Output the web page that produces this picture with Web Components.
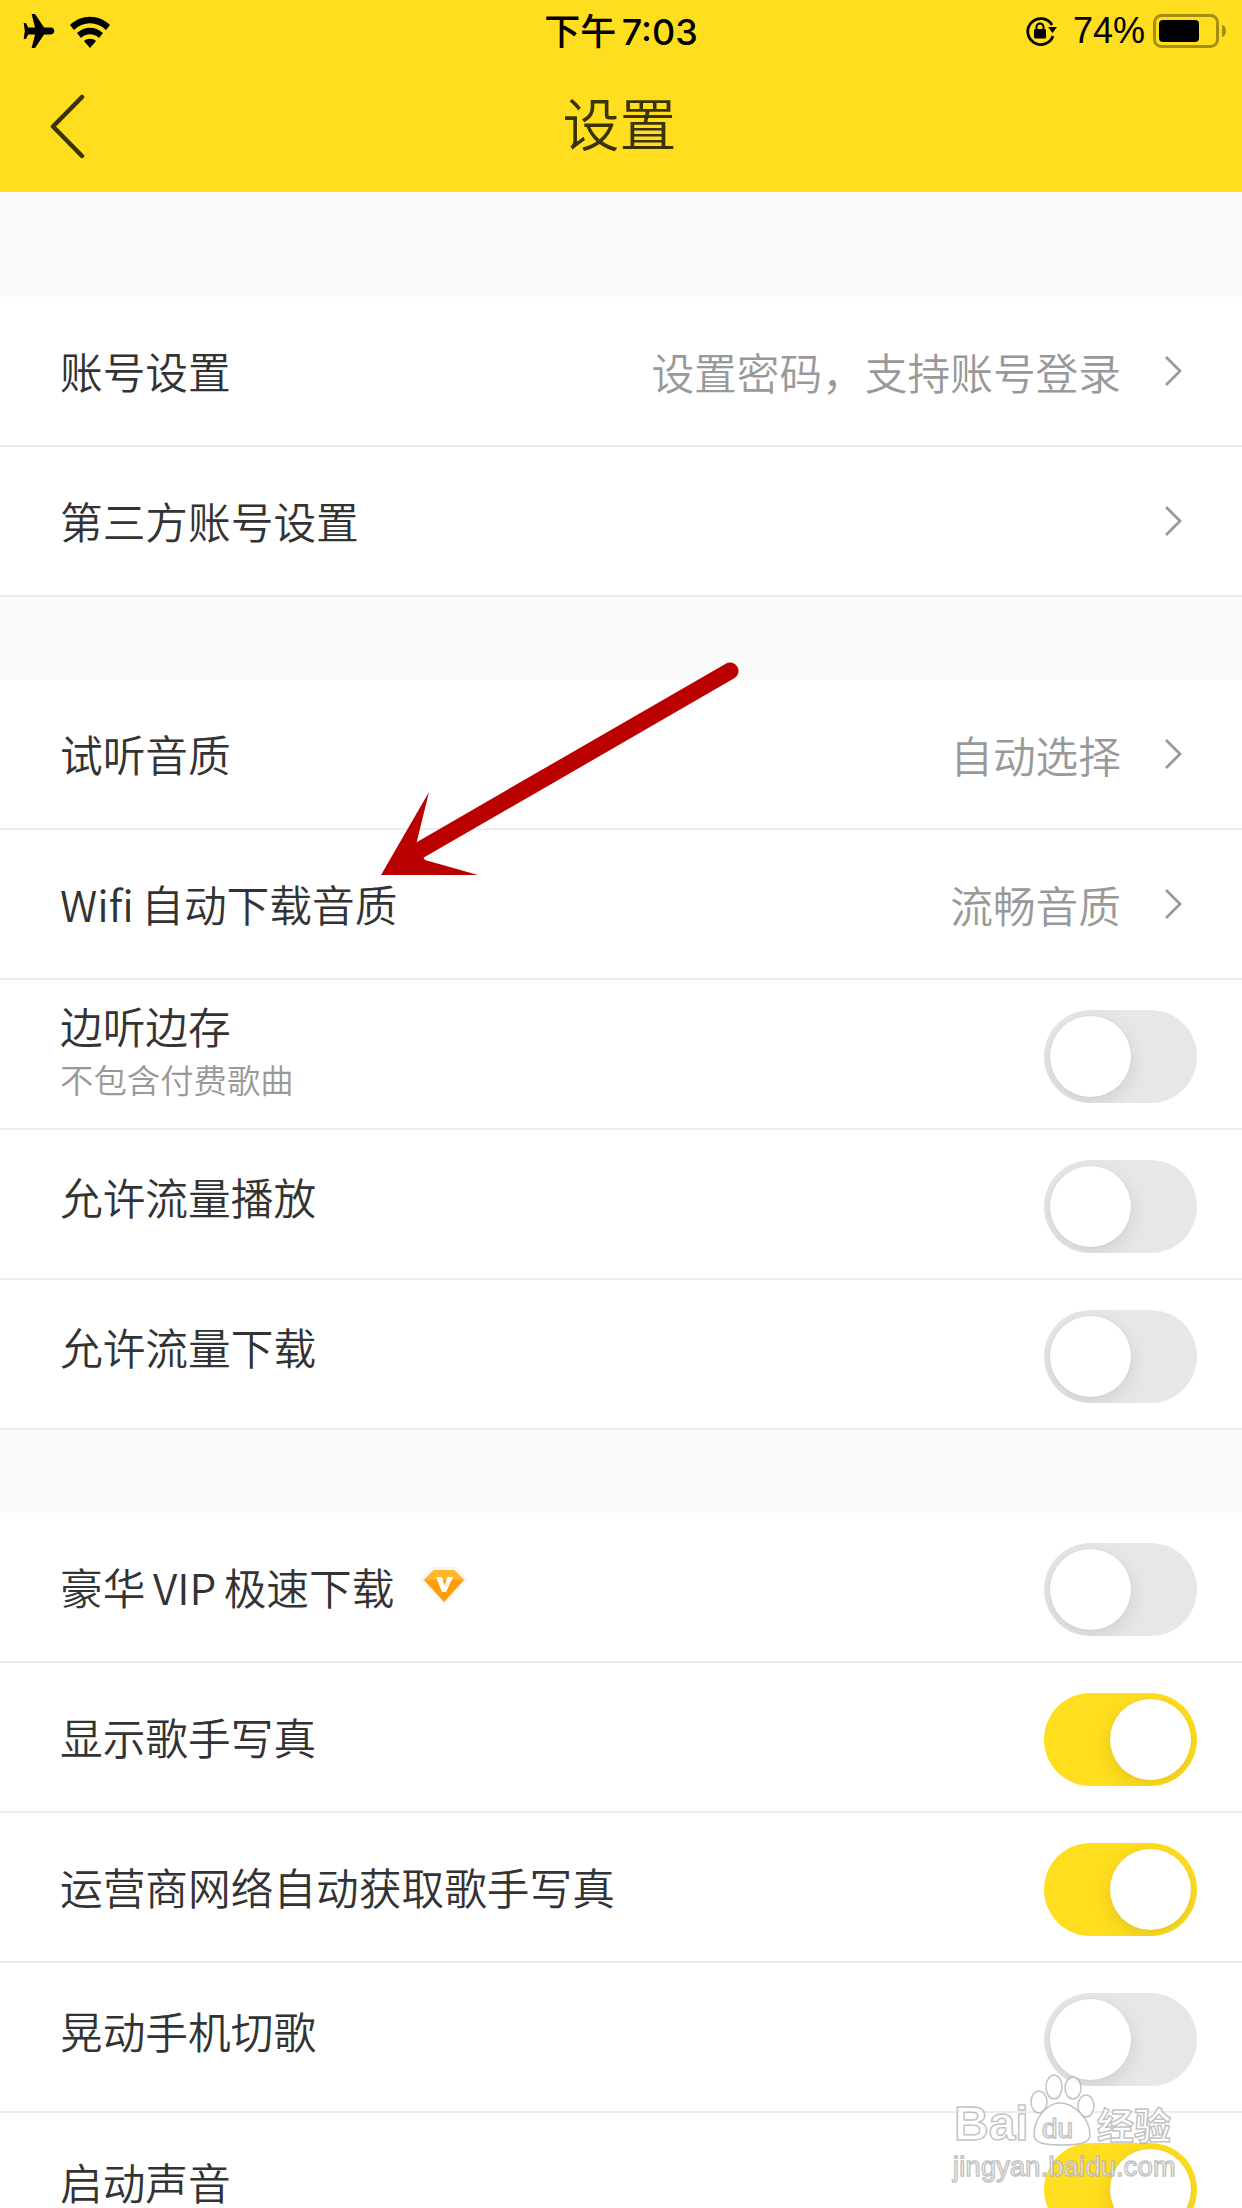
<!DOCTYPE html>
<html lang="zh"><head><meta charset="utf-8"><title>设置</title>
<style>
html,body{margin:0;padding:0;height:2208px;overflow:hidden;background:#fff}
body{font-family:"Noto Sans CJK SC","Liberation Sans",sans-serif;font-weight:350;position:relative}
</style></head><body>
<app-header></app-header>
<set-gap h="105"></set-gap>
<set-row label="账号设置" value="设置密码，支持账号登录" chevron></set-row>
<set-row label="第三方账号设置" chevron></set-row>
<set-gap h="83"></set-gap>
<set-row label="试听音质" value="自动选择" chevron></set-row>
<set-row label="Wifi 自动下载音质" value="流畅音质" chevron></set-row>
<set-row label="边听边存" sub="不包含付费歌曲" toggle="off"></set-row>
<set-row label="允许流量播放" toggle="off" up="8"></set-row>
<set-row label="允许流量下载" toggle="off" up="8"></set-row>
<set-gap h="83"></set-gap>
<set-row label="豪华 VIP 极速下载" toggle="off" up="1"><vip-gem></vip-gem></set-row>
<set-row label="显示歌手写真" toggle="on"></set-row>
<set-row label="运营商网络自动获取歌手写真" toggle="on"></set-row>
<set-row label="晃动手机切歌" toggle="off" up="7"></set-row>
<set-row label="启动声音" toggle="on" up="6"></set-row>
<red-arrow></red-arrow>
<baidu-mark></baidu-mark>
<script>
const def=(n,html,init)=>customElements.define(n,class extends HTMLElement{
  constructor(){super();this.attachShadow({mode:'open'}).innerHTML=html;}
  connectedCallback(){init&&init.call(this,this.shadowRoot);}
});
def('status-bar',`<style>
:host{display:flex;align-items:center;justify-content:space-between;height:62px;position:relative;color:#000}
.l,.r{display:flex;align-items:center}
.l{padding-left:22px;gap:11px}
.t{position:absolute;left:0;right:0;top:9px;text-align:center;font-family:Inter,"Noto Sans CJK SC",sans-serif;font-weight:500;font-size:36px;line-height:46px;word-spacing:-4px}
.r{padding-right:16px;font-family:"Liberation Sans",sans-serif;font-size:36px;font-weight:400}
svg{display:block}
</style>
<div class="l">
<svg width="34" height="34" viewBox="0 0 27 30"><path d="M7 0h3l8 12h6c2 0 3 1.500 3 3s-1 3-3 3h-6L10 30H7l3-12H4l-2 4H0l1-7-1-7h2l2 4h6z" fill="#000"/></svg>
<svg width="46" height="34" viewBox="0 0 40 34"><path d="M0 11C11 0 29 0 40 11l-4 5C27 7 13 7 4 16z M7 19c8-7 18-7 26 0l-4 5c-5-5-13-5-18 0z M14 27c3-3 9-3 12 0l-6 7z" fill="#000"/></svg>
</div>
<div class="t">下午 7:03</div>
<div class="r">
<svg width="32" height="30" viewBox="0 0 32 30" style="margin-right:16px"><path d="M27 9A13 13 0 1 0 28 20" fill="none" stroke="#000" stroke-width="2.800"/><path d="M23 11h9l-4.500 6z" fill="#000"/><rect x="9" y="13" width="12" height="9.500" rx="1.500" fill="#000"/><path d="M11.500 14v-3a3.500 3.500 0 0 1 7 0v3" fill="none" stroke="#000" stroke-width="2"/></svg>
<span style="margin-right:8px">74%</span>
<svg width="73" height="34" viewBox="0 0 73 34"><rect x="1.500" y="1.500" width="63" height="31" rx="7" fill="none" stroke="#a58f13" stroke-width="3"/><rect x="6" y="6" width="40" height="22" rx="4" fill="#000"/><path d="M69 11q4 1 4 6t-4 6z" fill="#a58f13"/></svg>
</div>`);
def('app-header',`<style>
:host{display:block;height:192px;background:#ffde1f}
.nav{height:118px;position:relative;display:flex;align-items:center;justify-content:center;color:#3a3306;font-size:57px}
.nav span{padding-right:3px}
svg{position:absolute;left:49px;top:32px;display:block}
</style>
<status-bar></status-bar>
<div class="nav"><svg width="38" height="66" viewBox="0 0 38 66"><path d="M33 3L4 32.500 33 62" fill="none" stroke="#3a3306" stroke-width="4.500" stroke-linecap="round" stroke-linejoin="round"/></svg><span>设置</span></div>`);
def('set-gap',`<style>:host{display:block;background:#fafafa}</style>`,function(){this.style.height=this.getAttribute('h')+'px'});
def('set-chevron',`<style>:host{display:block;width:18px;height:32px}svg{display:block}</style><svg width="18" height="32" viewBox="0 0 18 32"><path d="M2 2l14 14L2 30" fill="none" stroke="#999" stroke-width="2.800"/></svg>`);
def('set-toggle',`<style>
:host{display:block;width:153px;height:93px;border-radius:47px;background:#e7e7e9;position:relative;margin-top:4px;overflow:hidden}
:host([on]){background:#ffde1f}
i{position:absolute;left:6px;top:6px;width:81px;height:81px;border-radius:50%;background:#fff;box-shadow:0 6px 20px rgba(0,0,0,.1),0 0 2px rgba(0,0,0,.08)}
:host([on]) i{left:66px}
</style><i></i>`);
def('vip-gem',`<style>:host{display:block;width:48px;height:38px;margin-left:26px}svg{display:block}</style>
<svg width="48" height="38" viewBox="0 0 48 38"><path d="M12 0h24l12 13-24 25L0 13z" fill="#f5f5f5"/><path d="M14 3h20l10 10-20 22L4 13z" fill="#ff9d0a"/><path d="M14 3h20l10 10H4z" fill="#ffb62a"/><path d="M16 10h6l2.500 9 3-9h5.500l-7 15h-4z" fill="#fff"/></svg>`);
def('set-row',`<style>
:host{display:flex;align-items:center;box-sizing:border-box;height:150px;background:#fff;border-bottom:2px solid #ececec;padding:0 45px 0 60px;font-size:42.7px;color:#333;word-spacing:-2px}
.m{flex:none;line-height:56px;margin-bottom:2px}
.s{font-size:33.4px;line-height:40px;color:#999;margin-top:6px}
.lab{display:flex;align-items:center}
.sp{flex:1}
.v{color:#999;margin-right:43px}
set-chevron{margin-right:15px}
</style>
<div class="m"><div class="lab"><span id="l"></span><slot></slot></div></div><div class="sp"></div><span class="v" id="v"></span>`,function(r){
  r.getElementById('l').textContent=this.getAttribute('label');
  const v=this.getAttribute('value');
  if(v)r.getElementById('v').textContent=v;else r.getElementById('v').remove();
  const m=r.querySelector('.m');
  const sub=this.getAttribute('sub');
  if(sub){const d=document.createElement('div');d.className='s';d.textContent=sub;m.append(d);m.style.marginBottom='12px';}
  const up=this.getAttribute('up');
  if(up)m.style.marginBottom=(up*2)+'px';
  if(this.hasAttribute('chevron'))r.append(document.createElement('set-chevron'));
  const t=this.getAttribute('toggle');
  if(t){const e=document.createElement('set-toggle');if(t==='on')e.setAttribute('on','');r.append(e);}
});
def('red-arrow',`<style>:host{position:absolute;left:0;top:0;pointer-events:none}svg{display:block}</style>
<svg width="1242" height="2208"><path d="M730 671L420 850" stroke="#bb0000" stroke-width="17" stroke-linecap="round" fill="none"/><path d="M429 792L416 845 425 860 478 875 381 875z" fill="#bb0000"/></svg>`);
def('baidu-mark',`<style>
:host{position:absolute;left:900px;top:2000px;width:342px;height:208px;pointer-events:none;font-family:"Liberation Sans",sans-serif}
span{position:absolute;white-space:nowrap;color:rgba(255,255,255,.85);-webkit-text-stroke:1.500px rgba(175,175,175,.75)}
svg{position:absolute;left:0;top:0}
</style>
<svg width="342" height="208"><g fill="rgba(255,255,255,.8)" stroke="rgba(175,175,175,.75)" stroke-width="1.500"><ellipse cx="154" cy="87" rx="8" ry="12"/><ellipse cx="173" cy="88" rx="8" ry="11"/><ellipse cx="139" cy="102" rx="8" ry="11"/><ellipse cx="186" cy="106" rx="8" ry="11"/><path d="M134 135c0-18 14-32 26-32s30 14 30 32c0 8-10 10-28 10s-28-2-28-10z"/></g></svg>
<span style="left:54px;top:94px;font-size:48px;line-height:60px;font-weight:700">Bai</span>
<span style="left:142px;top:113px;font-size:28px;line-height:32px">du</span>
<span style="left:197px;top:102px;font-size:37px;line-height:44px;font-family:'Noto Sans CJK SC',sans-serif;font-weight:700">经验</span>
<span style="left:53px;top:149px;font-size:27px;line-height:36px;letter-spacing:.3px">jingyan.baidu.com</span>`);
</script>
</body></html>
